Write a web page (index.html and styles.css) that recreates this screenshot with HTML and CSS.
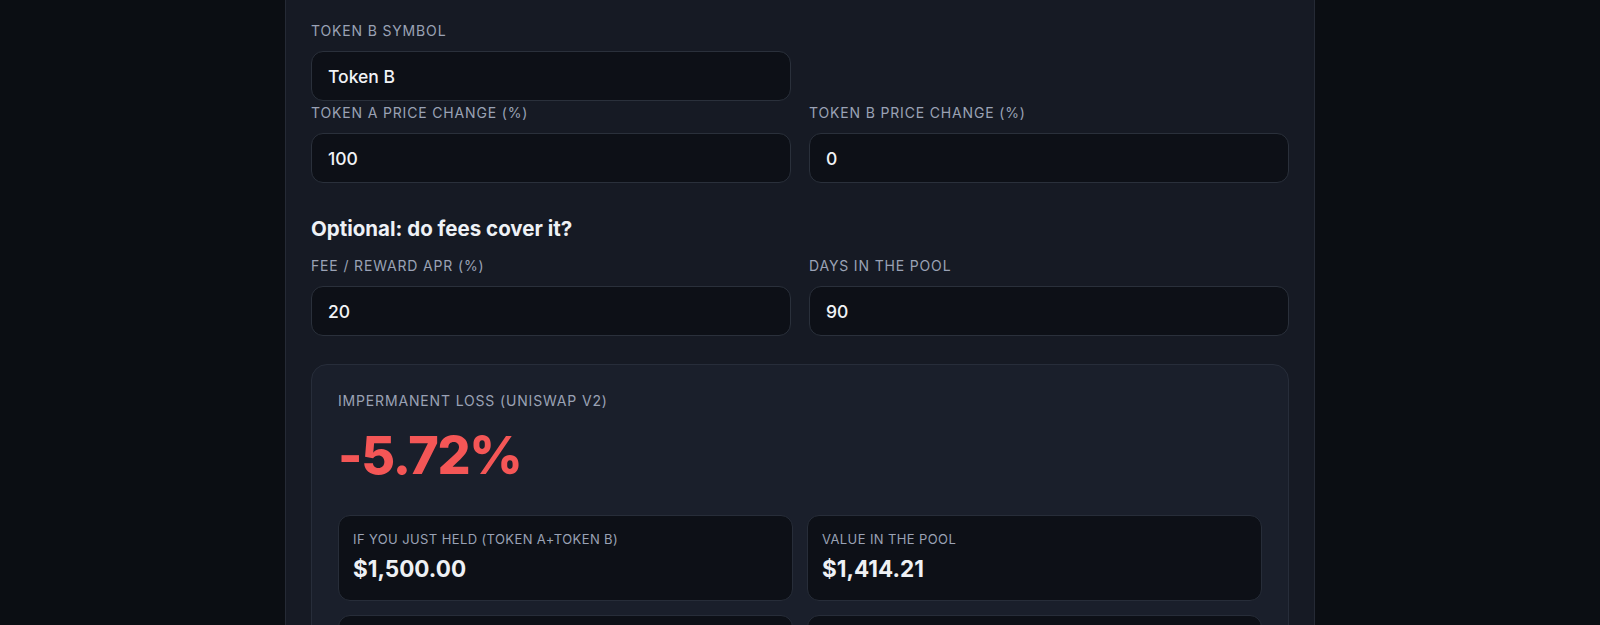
FILE: index.html
```html
<!DOCTYPE html>
<html lang="en">
<head>
  <meta charset="UTF-8">
  <meta name="viewport" content="width=device-width, initial-scale=1.0">
  <title>Impermanent Loss Calculator</title>
  <link rel="stylesheet" href="styles.css">
</head>
<body>
  <main class="calc-card">
    <div class="field-grid">
      <div class="field">
        <label class="field-label" for="token-b">Token B symbol</label>
        <input class="field-input" type="text" id="token-b" value="Token B">
      </div>
    </div>

    <div class="field-grid field-grid-next">
      <div class="field">
        <label class="field-label" for="change-a">Token A price change (%)</label>
        <input class="field-input" type="text" id="change-a" value="100">
      </div>
      <div class="field">
        <label class="field-label" for="change-b">Token B price change (%)</label>
        <input class="field-input" type="text" id="change-b" value="0">
      </div>
    </div>

    <h2 class="section-title">Optional: do fees cover it?</h2>

    <div class="field-grid">
      <div class="field">
        <label class="field-label" for="apr">Fee / reward APR (%)</label>
        <input class="field-input" type="text" id="apr" value="20">
      </div>
      <div class="field">
        <label class="field-label" for="days">Days in the pool</label>
        <input class="field-input" type="text" id="days" value="90">
      </div>
    </div>

    <section class="result">
      <div class="result-label">Impermanent loss (Uniswap V2)</div>
      <div class="result-value">-5.72%</div>
      <div class="stat-grid">
        <div class="stat">
          <div class="stat-label">If you just held (Token A+Token B)</div>
          <div class="stat-value">$1,500.00</div>
        </div>
        <div class="stat">
          <div class="stat-label">Value in the pool</div>
          <div class="stat-value">$1,414.21</div>
        </div>
        <div class="stat">
          <div class="stat-label">Loss vs holding</div>
          <div class="stat-value">-$85.79</div>
        </div>
        <div class="stat">
          <div class="stat-label">Fees earned (est.)</div>
          <div class="stat-value">$69.74</div>
        </div>
      </div>
    </section>
  </main>
</body>
</html>
```

FILE: styles.css
```css
body {
  margin: 0;
  background-color: #0b0e13;
  font-family: Inter, "Noto Sans", sans-serif;
  color: #eef1f5;
}

.calc-card {
  width: 1030px;
  box-sizing: border-box;
  margin: 0 auto;
  padding: 21px 25px 40px;
  background-color: #161a24;
  border-left: 1px solid #252a35;
  border-right: 1px solid #252a35;
}

.field-grid {
  display: grid;
  grid-template-columns: 1fr 1fr;
  column-gap: 18px;
}
.field-grid-next {
  margin-top: 2px;
}

.field-label {
  display: block;
  font-size: 14px;
  line-height: 20px;
  letter-spacing: 0.06em;
  text-transform: uppercase;
  color: #9aa2b5;
  margin-bottom: 10px;
}

.field-input {
  display: block;
  width: 100%;
  height: 50px;
  box-sizing: border-box;
  padding: 0 16px;
  background-color: #0d1017;
  border: 1px solid #2a303b;
  border-radius: 12px;
  color: #f1f3f6;
  font-family: inherit;
  font-size: 17.5px;
  font-weight: 500;
  outline: none;
}

.section-title {
  margin: 33px 0 14px;
  font-size: 20.5px;
  line-height: 26px;
  font-weight: 700;
  color: #eef1f6;
}

.result {
  margin-top: 28px;
  padding: 26px;
  background-color: #1a1f2b;
  border: 1px solid #272d3a;
  border-radius: 16px;
}
.result-label {
  font-size: 14px;
  line-height: 20px;
  letter-spacing: 0.06em;
  text-transform: uppercase;
  color: #9aa2b5;
}
.result-value {
  margin: 14px 0 28px;
  font-size: 52px;
  line-height: 62px;
  font-weight: 800;
  letter-spacing: -0.025em;
  color: #f45656;
}

.stat-grid {
  display: grid;
  grid-template-columns: 1fr 1fr;
  gap: 14px;
}
.stat {
  padding: 15px 14px 18px;
  background-color: #0d1017;
  border: 1px solid #272d39;
  border-radius: 12px;
}
.stat-label {
  font-size: 13px;
  line-height: 16px;
  letter-spacing: 0.03em;
  text-transform: uppercase;
  color: #9aa2b5;
  margin-bottom: 9px;
}
.stat-value {
  font-size: 22.5px;
  line-height: 26px;
  font-weight: 700;
  color: #eef1f5;
}
```
